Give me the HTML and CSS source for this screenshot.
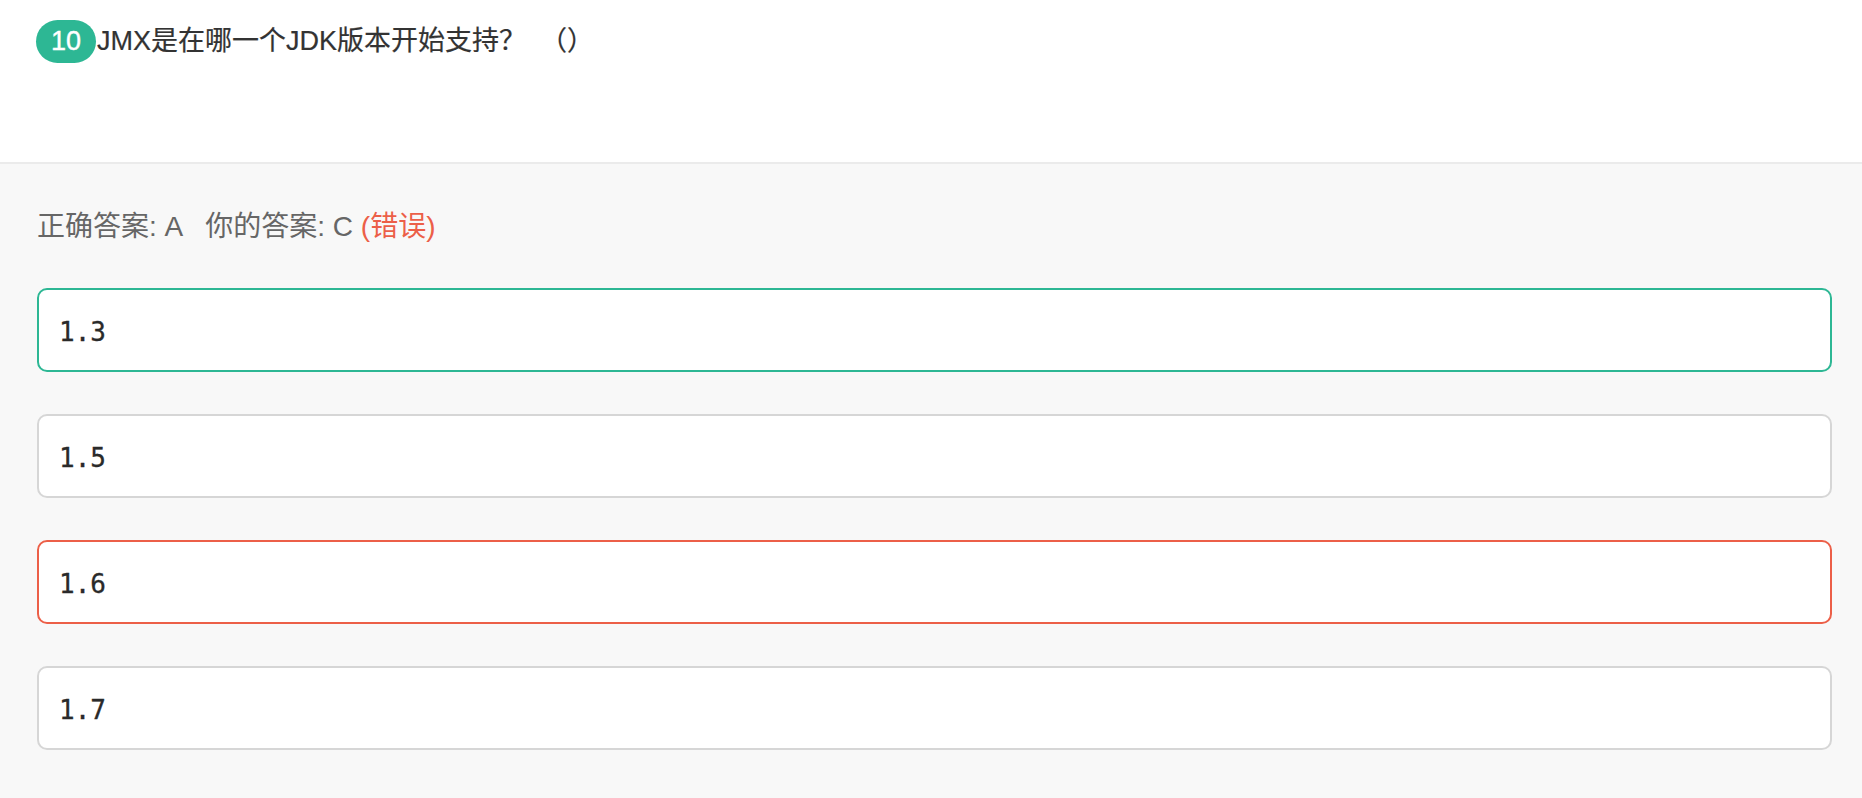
FILE: index.html
```html
<!DOCTYPE html>
<html lang="zh">
<head>
<meta charset="utf-8">
<title>JMX</title>
<link rel="stylesheet" href="styles.css">
</head>
<body>
<div class="top">
  <div class="question">
    <span class="badge">10</span>
    <span class="qtext">JMX是在哪一个JDK版本开始支持？<span class="paren">（）</span></span>
  </div>
</div>
<div class="bottom">
  <div class="answer">正确答案: A<span class="gap"></span>你的答案: C <span class="wrong">(错误)</span></div>
  <div class="options">
    <div class="option correct">1.3</div>
    <div class="option">1.5</div>
    <div class="option chosen">1.6</div>
    <div class="option">1.7</div>
  </div>
</div>
</body>
</html>
```
FILE: styles.css
```css
html, body {
  margin: 0;
  padding: 0;
}
body {
  background: #f8f8f8;
  font-family: "Liberation Sans", "Noto Sans CJK SC", sans-serif;
  height: 798px;
  overflow: hidden;
}
.top {
  background: #ffffff;
  height: 162px;
  border-bottom: 2px solid #ebebeb;
}
.question {
  display: flex;
  align-items: center;
  padding: 20px 0 0 36px;
}
.badge {
  display: flex;
  align-items: center;
  justify-content: center;
  width: 60px;
  height: 43px;
  border-radius: 22px;
  background: #2db794;
  color: #ffffff;
  font-size: 27px;
  margin-right: 1px;
  -webkit-text-stroke: 0.4px #ffffff;
}
.qtext {
  font-size: 27px;
  color: #333333;
  line-height: 43px;
  -webkit-text-stroke: 0.2px #333333;
}
.paren {
  margin-left: 14px;
}
.bottom {
  padding: 48px 30px 0 37px;
}
.answer {
  font-size: 28px;
  line-height: 30px;
  color: #666666;
}
.gap {
  display: inline-block;
  width: 22px;
}
.wrong {
  color: #ec5f48;
}
.options {
  margin-top: 46px;
  display: flex;
  flex-direction: column;
  gap: 42px;
}
.option {
  box-sizing: border-box;
  height: 84px;
  background: #ffffff;
  border: 2px solid #d6d6d6;
  border-radius: 10px;
  display: flex;
  align-items: center;
  padding: 3px 0 0 20px;
  font-family: "DejaVu Sans Mono", monospace;
  font-size: 26px;
  color: #2a2a2a;
  -webkit-text-stroke: 0.3px #2a2a2a;
}
.option.correct {
  border-color: #2db794;
}
.option.chosen {
  border-color: #ec5f48;
}
```
